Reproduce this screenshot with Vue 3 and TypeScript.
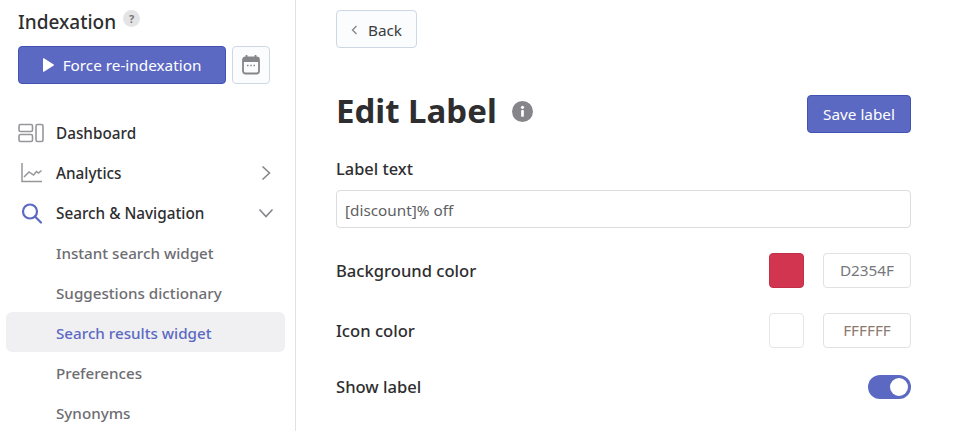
<script setup lang="ts">
const subItems: { label: string; active?: boolean }[] = [
  { label: 'Instant search widget' },
  { label: 'Suggestions dictionary' },
  { label: 'Search results widget', active: true },
  { label: 'Preferences' },
  { label: 'Synonyms' },
]
</script>

<template>
  <div class="page">
    <aside class="sidebar">
      <div class="title-row">
        <h2 class="title">Indexation</h2>
        <span class="help">?</span>
      </div>
      <div class="actions">
        <button class="btn primary force">
          <svg width="11" height="14" viewBox="0 0 11 14"><path d="M0 .8v12.4a.6.6 0 0 0 .9.5l9.800-6.200a.6.6 0 0 0 0-1L.9.3A.6.6 0 0 0 0 .8z" fill="#fff"/></svg>
          <span>Force re-indexation</span>
        </button>
        <button class="btn calendar" aria-label="Calendar">
          <svg width="18" height="20" viewBox="0 0 18 20"><path d="M4.500 0v3M13.500 0v3" stroke="#85858a" stroke-width="1.800" fill="none"/><rect x="1" y="2.500" width="16" height="16" rx="2.500" fill="none" stroke="#85858a" stroke-width="1.800"/><path d="M1 3.500a1.500 1.500 0 0 1 1.500-1.500h13A1.500 1.500 0 0 1 17 3.500V7H1z" fill="#85858a"/><path d="M5 10.500h1.500M8.250 10.500h1.500M11.500 10.500H13" stroke="#85858a" stroke-width="1.500"/></svg>
        </button>
      </div>
      <nav class="nav">
        <a class="nav-item">
          <span class="nav-icon">
            <svg width="26" height="20" viewBox="0 0 26 20" fill="none" stroke="#97979b" stroke-width="1.600"><rect x="1" y="1.500" width="13.500" height="7" rx="1.500"/><rect x="1" y="11.500" width="13.500" height="7" rx="1.500"/><rect x="18" y="1.500" width="7" height="17" rx="1.500"/></svg>
          </span>
          <span>Dashboard</span>
        </a>
        <a class="nav-item">
          <span class="nav-icon indent">
            <svg width="21" height="20" viewBox="0 0 21 20" fill="none" stroke="#97979b" stroke-width="1.500"><path d="M1 0V18.500H21"/><path d="M3 14l5-5 4.500 3 3-3.500 2 1.500 3-2.500"/></svg>
          </span>
          <span class="grow">Analytics</span>
          <svg class="chev" width="10" height="16" viewBox="0 0 10 16" fill="none" stroke="#85858a" stroke-width="1.600"><path d="M1.500 1.500L8.500 8l-7 6.500"/></svg>
        </a>
        <a class="nav-item">
          <span class="nav-icon indent">
            <svg width="21" height="21" viewBox="0 0 21 21" fill="none" stroke="#5c69c2" stroke-width="2.200"><circle cx="9" cy="8.500" r="7"/><path d="M14 13.500l6 6" stroke-linecap="round"/></svg>
          </span>
          <span class="grow">Search &amp; Navigation</span>
          <svg class="chev down" width="16" height="10" viewBox="0 0 16 10" fill="none" stroke="#85858a" stroke-width="1.600"><path d="M1.500 1.500L8 8.500l6.500-7"/></svg>
        </a>
        <a v-for="item in subItems" :key="item.label" class="sub-item" :class="{ active: item.active }">{{ item.label }}</a>
      </nav>
    </aside>

    <main class="main">
      <button class="btn back">
        <svg width="7" height="10" viewBox="0 0 7 10" fill="none" stroke="#85858a" stroke-width="1.300"><path d="M5.500 1L1.500 5l4 4"/></svg>
        <span>Back</span>
      </button>

      <header class="head">
        <div class="head-left">
          <h1>Edit Label</h1>
          <svg class="info" width="21" height="21" viewBox="0 0 20 20"><circle cx="10" cy="10" r="10" fill="#85858a"/><rect x="8.700" y="8.500" width="2.600" height="6.500" rx="0.800" fill="#fff"/><circle cx="10" cy="6" r="1.500" fill="#fff"/></svg>
        </div>
        <button class="btn primary save">Save label</button>
      </header>

      <label class="field-label">Label text</label>
      <input class="text-input" type="text" value="[discount]% off" />

      <div class="row">
        <span class="row-label">Background color</span>
        <span class="swatch red"></span>
        <span class="hex">D2354F</span>
      </div>
      <div class="row">
        <span class="row-label">Icon color</span>
        <span class="swatch white"></span>
        <span class="hex tan">FFFFFF</span>
      </div>
      <div class="row toggle-row">
        <span class="row-label">Show label</span>
        <span class="toggle"><span class="knob"></span></span>
      </div>
    </main>
  </div>
</template>

<style>
html, body { margin: 0; overflow: hidden; background: #fff; }
</style>

<style scoped>
.page {
  display: flex;
  width: 953px;
  height: 431px;
  overflow: hidden;
  font-family: "Noto Sans", "Open Sans", sans-serif;
  color: #2e2e30;
  background: #fff;
}
.sidebar {
  box-sizing: border-box;
  width: 296px;
  flex: none;
  border-right: 1px solid #e1e1e3;
  padding: 8px 10px 0 6px;
}
.title-row {
  display: flex;
  align-items: flex-start;
  gap: 7px;
  padding-left: 12px;
  height: 38px;
}
.title {
  margin: 0;
  font-size: 19px;
  line-height: 28px;
  font-weight: 500;
}
.help {
  width: 17px;
  height: 17px;
  margin-top: 2px;
  border-radius: 50%;
  background: #e4e4e6;
  color: #77777b;
  font-size: 11px;
  font-weight: 700;
  line-height: 17px;
  text-align: center;
}
.actions {
  display: flex;
  gap: 6px;
  padding-left: 12px;
}
.btn {
  box-sizing: border-box;
  display: inline-flex;
  align-items: center;
  justify-content: center;
  height: 38px;
  border-radius: 4px;
  font: inherit;
  font-size: 15.3px;
  border: 1px solid #ced8e5;
  background: #fbfcfe;
  color: #3a3a3d;
  padding: 0;
}
.primary {
  background: #5c69c2;
  border-color: #4353b3;
  color: #fff;
}
.force {
  width: 208px;
  gap: 9px;
}
.calendar {
  width: 38px;
}
.nav {
  margin-top: 29px;
  display: flex;
  flex-direction: column;
}
.nav-item {
  display: flex;
  align-items: center;
  height: 40px;
  padding-left: 12px;
  font-size: 15.3px;
  font-weight: 500;
}
.nav-icon {
  width: 38px;
  flex: none;
  display: flex;
  align-items: center;
}
.nav-icon.indent {
  padding-left: 3px;
  width: 35px;
}
.grow {
  flex: 1;
}
.chev {
  margin-right: 14px;
}
.chev.down {
  margin-right: 11px;
}
.sub-item {
  box-sizing: border-box;
  display: flex;
  align-items: center;
  height: 40px;
  padding: 2px 0 0 50px;
  font-size: 15.2px;
  font-weight: 500;
  color: #6d6d72;
  border-radius: 6px;
}
.nav-item + .sub-item {
  margin-top: -1px;
}
.sub-item.active {
  background: #f0f0f2;
  color: #5c69c2;
}
.main {
  box-sizing: border-box;
  width: 615px;
  flex: none;
  padding: 10px 0 0 40px;
}
.back {
  width: 81px;
  gap: 10px;
  display: flex;
}
.back svg {
  margin-top: 2px;
}
.back span {
  padding-top: 1px;
}
.head {
  display: flex;
  justify-content: space-between;
  align-items: flex-start;
  margin-top: 47px;
  height: 38px;
}
.head-left {
  display: flex;
  align-items: center;
  height: 32px;
  gap: 15px;
}
h1 {
  margin: 0;
  font-size: 33px;
  line-height: 32px;
  font-weight: 700;
  color: #2e2e30;
}
.save {
  width: 104px;
}
.field-label {
  display: block;
  margin-top: 24px;
  font-size: 16.400px;
  line-height: 24px;
  font-weight: 500;
}
.text-input {
  box-sizing: border-box;
  display: block;
  width: 575px;
  height: 38px;
  margin-top: 9px;
  padding: 2px 8px 0;
  border: 1px solid #dcdcde;
  border-radius: 4px;
  font: inherit;
  font-size: 15.300px;
  color: #5f5f64;
  background: #fff;
  outline: none;
}
.row {
  display: flex;
  align-items: center;
  height: 35px;
  margin-top: 25px;
}
.row-label {
  flex: 1;
  font-size: 16.600px;
  font-weight: 500;
}
.swatch {
  box-sizing: border-box;
  width: 35px;
  height: 35px;
  border-radius: 4px;
}
.red {
  background: #d2354f;
  border: 1px solid #c42f48;
}
.white {
  background: #fff;
  border: 1px solid #e6e6e8;
}
.hex {
  box-sizing: border-box;
  width: 88px;
  height: 35px;
  margin-left: 19px;
  border: 1px solid #e1e1e3;
  border-radius: 4px;
  font-size: 15.300px;
  line-height: 33px;
  text-align: center;
  color: #77777b;
}
.hex.tan {
  color: #8a7a72;
}
.toggle-row {
  height: 24px;
  margin-top: 27px;
}
.toggle-row .row-label {
  padding-bottom: 2px;
}
.toggle {
  box-sizing: border-box;
  width: 43px;
  height: 24px;
  border-radius: 12px;
  background: #5c69c2;
  display: flex;
  justify-content: flex-end;
  align-items: center;
  padding-right: 3px;
}
.knob {
  width: 18px;
  height: 18px;
  border-radius: 50%;
  background: #fff;
}
</style>
